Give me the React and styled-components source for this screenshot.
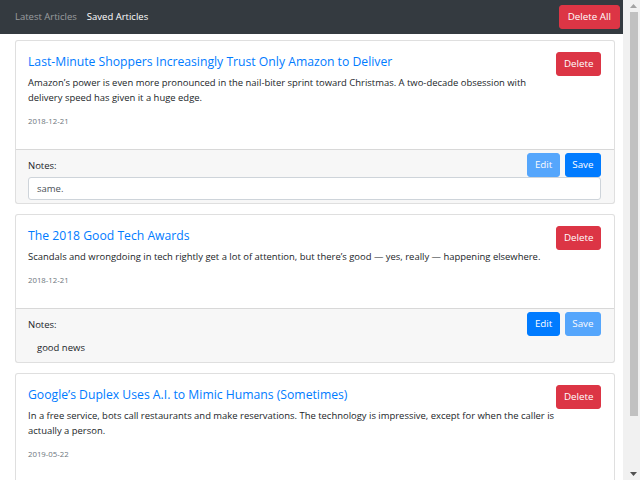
import React from "react";
import styled, { createGlobalStyle } from "styled-components";

const GlobalStyle = createGlobalStyle`
  html, body {
    overflow: hidden;
  }
  body {
    margin: 0;
    font-family: "Open Sans", "Noto Sans", sans-serif;
    font-size: 9.5px;
    line-height: 1.5;
    color: #212529;
    background: #fff;
  }
`;

const articles = [
  {
    title: "Last-Minute Shoppers Increasingly Trust Only Amazon to Deliver",
    summary:
      "Amazon’s power is even more pronounced in the nail-biter sprint toward Christmas. A two-decade obsession with delivery speed has given it a huge edge.",
    date: "2018-12-21",
    note: "same.",
    editing: true
  },
  {
    title: "The 2018 Good Tech Awards",
    summary:
      "Scandals and wrongdoing in tech rightly get a lot of attention, but there’s good — yes, really — happening elsewhere.",
    date: "2018-12-21",
    note: "good news",
    editing: false
  },
  {
    title: "Google’s Duplex Uses A.I. to Mimic Humans (Sometimes)",
    summary:
      "In a free service, bots call restaurants and make reservations. The technology is impressive, except for when the caller is actually a person.",
    date: "2019-05-22",
    note: "",
    editing: false
  }
];

export default function App() {
  return (
    <>
      <GlobalStyle />
      <Viewport>
        <Page>
          <Navbar>
            <NavLinks>
              <NavLink>Latest Articles</NavLink>
              <NavLink active>Saved Articles</NavLink>
            </NavLinks>
            <Button variant="danger" wide>
              Delete All
            </Button>
          </Navbar>
          <Main>
            {articles.map((article, i) => (
              <Card key={i}>
                <CardBody>
                  <Content>
                    <Title href="#">{article.title}</Title>
                    <Summary>{article.summary}</Summary>
                    <DateLine>{article.date}</DateLine>
                  </Content>
                  <Button variant="danger">Delete</Button>
                </CardBody>
                <CardFooter>
                  <NotesRow>
                    <NotesLabel>Notes:</NotesLabel>
                    <Actions>
                      <Button variant="primary" faded={article.editing}>
                        Edit
                      </Button>
                      <Button variant="primary" faded={!article.editing}>
                        Save
                      </Button>
                    </Actions>
                  </NotesRow>
                  <NoteBox editing={article.editing}>{article.note}</NoteBox>
                </CardFooter>
              </Card>
            ))}
          </Main>
        </Page>
        <ScrollBar>
          <ArrowButton>
            <svg width="7" height="4" viewBox="0 0 7 4">
              <polygon points="0,4 3.5,0 7,4" fill="#a3a3a3" />
            </svg>
          </ArrowButton>
          <Track>
            <Thumb />
          </Track>
          <ArrowButton>
            <svg width="7" height="4" viewBox="0 0 7 4">
              <polygon points="0,0 3.5,4 7,0" fill="#505050" />
            </svg>
          </ArrowButton>
        </ScrollBar>
      </Viewport>
    </>
  );
}

const Viewport = styled.div`
  display: flex;
  height: 100vh;
`;

const Page = styled.div`
  flex: 1;
  min-width: 0;
  overflow: hidden;
`;

const ScrollBar = styled.div`
  display: flex;
  flex-direction: column;
  width: 17px;
  flex-shrink: 0;
  background: #f1f1f1;
`;

const ArrowButton = styled.div`
  display: flex;
  align-items: center;
  justify-content: center;
  height: 12px;
  padding-left: 3px;
`;

const Track = styled.div`
  flex: 1;
  padding: 0 2px 0 7px;
`;

const Thumb = styled.div`
  height: 404px;
  background: #c1c1c1;
`;

const Navbar = styled.nav`
  display: flex;
  align-items: center;
  justify-content: space-between;
  height: 34px;
  box-sizing: border-box;
  padding: 0 3px 0 10px;
  background-color: #343a40;
`;

const NavLinks = styled.div`
  display: flex;
`;

const NavLink = styled.a`
  padding: 5px;
  color: ${props => (props.active ? "#fff" : "rgba(255, 255, 255, 0.5)")};
  cursor: pointer;
`;

const Button = styled.button`
  height: 24px;
  box-sizing: border-box;
  padding: 0 ${props => (props.wide ? "8px" : "6.5px")};
  font-family: inherit;
  font-size: 9.8px;
  line-height: 1.5;
  color: #fff;
  border: 1px solid;
  border-radius: 3px;
  background-color: ${props =>
    props.variant === "danger" ? "#dc3545" : "#007bff"};
  border-color: ${props =>
    props.variant === "danger" ? "#dc3545" : "#007bff"};
  opacity: ${props => (props.faded ? 0.65 : 1)};
  cursor: pointer;
`;

const Main = styled.main`
  padding: 6px 8px 7px 15px;
`;

const Card = styled.div`
  display: flex;
  flex-direction: column;
  margin-bottom: 10px;
  border: 1px solid rgba(0, 0, 0, 0.125);
  border-radius: 3px;
  background: #fff;
`;

const CardBody = styled.div`
  display: flex;
  align-items: flex-start;
  padding: 11px 13px 12px 12px;
`;

const Content = styled.div`
  flex: 1;
  padding-top: 1px;
`;

const Title = styled.a`
  display: block;
  margin-bottom: 5px;
  font-size: 12.2px;
  line-height: 17px;
  color: #007bff;
  text-decoration: none;
`;

const Summary = styled.p`
  margin: 0 0 10px;
  font-size: 9.45px;
  line-height: 15px;
`;

const DateLine = styled.p`
  margin: 0 0 10px;
  font-size: 7.8px;
  line-height: 12px;
  color: #6c757d;
`;

const CardFooter = styled.div`
  padding: 3px 13px 3px 12px;
  background-color: rgba(0, 0, 0, 0.03);
  border-top: 1px solid rgba(0, 0, 0, 0.125);
`;

const NotesRow = styled.div`
  display: flex;
  align-items: center;
  justify-content: space-between;
`;

const NotesLabel = styled.span`
  padding-top: 2px;
  color: #212529;
`;

const Actions = styled.div`
  display: flex;
  gap: 5px;
`;

const NoteBox = styled.div`
  height: 23px;
  box-sizing: border-box;
  padding: 0 8px;
  line-height: 21px;
  color: ${props => (props.editing ? "#495057" : "#212529")};
  background: ${props => (props.editing ? "#fff" : "transparent")};
  border: 1px solid ${props => (props.editing ? "#ced4da" : "transparent")};
  border-radius: 3px;
`;
